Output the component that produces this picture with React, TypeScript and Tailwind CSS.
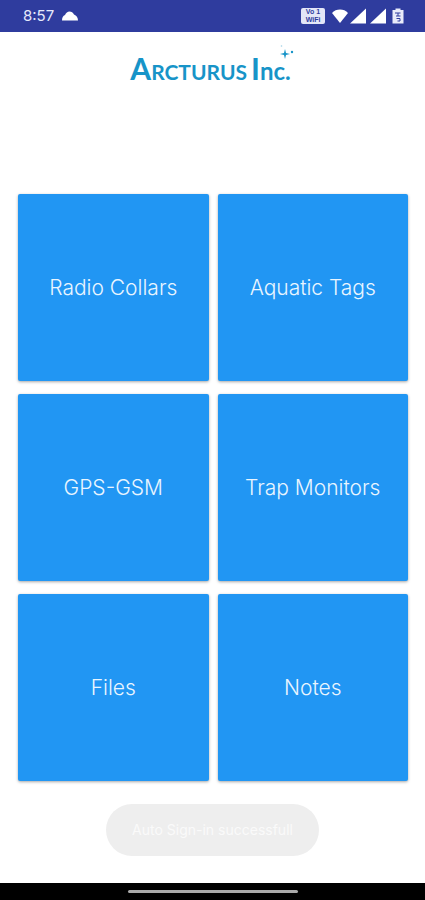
const menuItems = [
  "Radio Collars",
  "Aquatic Tags",
  "GPS-GSM",
  "Trap Monitors",
  "Files",
  "Notes",
];

const StatusBar = () => (
  <div className="h-8 shrink-0 flex items-center justify-between bg-[#2f3c9e] text-[#e6e9fb] pl-[23px] pr-5">
    <div className="flex items-center gap-2">
      <span className="text-[15px] leading-5">8:57</span>
      <svg width="16" height="12" viewBox="0 0 16 12" fill="#fff" aria-label="Cloud">
        <path d="M0 10.500 C0 7.500 1 6 3 5 C4 3 5.500 1.500 7.500 1.500 C9.500 1.500 11 2.500 12 4.500 C14.500 5.500 16 7.500 16 10.500 Z" />
      </svg>
    </div>
    <div className="flex items-center">
      <div className="w-6 h-4 rounded-xs bg-[#e3e6f7] text-[#2f3c9e] flex flex-col justify-center text-center font-['Liberation_Sans',sans-serif] text-[7px] leading-[8px] font-bold">
        <span>Vo 1</span>
        <span>WiFi</span>
      </div>
      <svg className="ml-1.5" width="18" height="16" viewBox="0 0 18 16" fill="#fff" aria-label="Wi-Fi">
        <path d="M9 15 L1 5 C3 2.500 6 1.500 9 1.500 C12 1.500 15 2.500 17 5 Z" />
      </svg>
      <svg width="18" height="16" viewBox="0 0 18 16" fill="#fff" aria-label="Signal">
        <path d="M1 15.500 L17 0.500 V15.500 Z" />
      </svg>
      <svg className="ml-0.5" width="18" height="16" viewBox="0 0 18 16" fill="#fff" aria-label="Signal">
        <path d="M1 15.500 L17 0.500 V15.500 Z" />
      </svg>
      <svg className="ml-1" width="14" height="16" viewBox="0 0 14 16" aria-label="Battery">
        <path d="M4.500 0.500 h5 v1.500 h3 v13.500 h-11 v-13.500 h3 Z" fill="#e9ebfa" />
        <path d="M4 5 h5.500 M5 8 h4.500 M7 5 v3 M5.500 10.500 h3.500 v2.500 h-2.500" fill="none" stroke="#2f3c9e" strokeWidth="1" />
      </svg>
    </div>
  </div>
);

const Logo = () => (
  <h1 className="relative flex items-baseline font-['Lato',sans-serif] font-bold leading-10 text-[#1794c8]">
    <span className="text-[30px]">A</span>
    <span className="text-[21px]">RCTURUS</span>
    <span className="text-[30px] ml-1">I</span>
    <span className="text-[24px]">nc.</span>
    <svg className="absolute -right-1 -top-1" width="16" height="16" viewBox="0 0 16 16" fill="#1794c8" aria-hidden="true">
      <path d="M6 5 L7 9 L11 10 L7 11 L6 15 L5 11 L1 10 L5 9 Z" />
      <circle cx="13" cy="8" r="1.200" />
      <circle cx="2.500" cy="2" r="0.800" fill="#9fcfe5" />
    </svg>
  </h1>
);

const App = () => {
  return (
    <div className="min-h-screen flex flex-col bg-white font-['Inter',sans-serif]">
      <StatusBar />

      <header className="h-[162px] shrink-0 flex justify-center pt-4 pr-1">
        <Logo />
      </header>

      {/* Menu */}
      <main className="grid grid-cols-2 gap-x-[9px] gap-y-[13px] pl-[18px] pr-[17px]">
        {menuItems.map((item) => (
          <button
            key={item}
            type="button"
            className="h-[187px] rounded-xs bg-[#2196f3] text-[#e9f5ff] text-[21px] leading-7 font-light shadow-[0_1px_3px_rgba(0,0,0,0.35)]"
          >
            {item}
          </button>
        ))}
      </main>

      {/* Toast */}
      <div className="grow flex items-start justify-center pt-[23px] pb-6">
        <div role="status" className="h-[52px] px-[26px] flex items-center rounded-full bg-[#eeeeee] text-[#fafafa] text-[14px] leading-5">
          Auto Sign-in successfull
        </div>
      </div>

      <div className="h-[17px] shrink-0 flex items-center justify-center bg-black">
        <div className="w-2/5 h-[3px] rounded-full bg-[#a9a9a9]" />
      </div>
    </div>
  );
};

export default App;
